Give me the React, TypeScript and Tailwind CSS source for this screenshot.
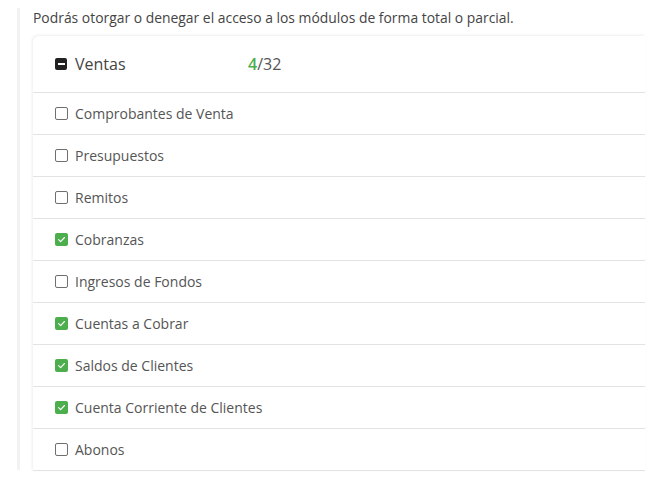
import React from "react";

const rows: { label: string; checked: boolean }[] = [
  { label: "Comprobantes de Venta", checked: false },
  { label: "Presupuestos", checked: false },
  { label: "Remitos", checked: false },
  { label: "Cobranzas", checked: true },
  { label: "Ingresos de Fondos", checked: false },
  { label: "Cuentas a Cobrar", checked: true },
  { label: "Saldos de Clientes", checked: true },
  { label: "Cuenta Corriente de Clientes", checked: true },
  { label: "Abonos", checked: false },
];

function Box({ checked }: { checked: boolean }) {
  if (checked) {
    return (
      <span className="flex h-[13px] w-[13px] items-center justify-center rounded-[2px] bg-[#4cae4c]">
        <svg width="9" height="9" viewBox="0 0 10 10" fill="none">
          <path d="M1.8 5.2 L4 7.3 L8.3 2.8" stroke="white" strokeWidth="1.3" strokeLinecap="round" strokeLinejoin="round" />
        </svg>
      </span>
    );
  }
  return <span className="block h-[13px] w-[13px] rounded-[2px] border-[1.5px] border-[#6f6f6f]" />;
}

export default function App() {
  return (
    <div className="h-[479px] w-[669px] bg-white pt-[8px] font-['Open_Sans',sans-serif]">
      <div className="ml-[17px] h-[462px] w-[628px] border-l-[3px] border-[#f2f2f2] pl-[13px]">
        <p className="text-[13.9px] leading-[19px] text-[#444]">
          Podrás otorgar o denegar el acceso a los módulos de forma total o parcial.
        </p>
        <div className="mt-[9px] overflow-hidden rounded-tl-[6px] bg-white shadow-[-1px_-1px_3px_rgba(0,0,0,0.07)]">
          <div className="flex h-[57px] items-center border-b border-[#e3e3e3] pl-[22px]">
            <span className="flex h-[12px] w-[12px] items-center justify-center rounded-[2px] bg-[#222]">
              <span className="block h-[2px] w-[7px] bg-white" />
            </span>
            <span className="ml-[8px] w-[173px] text-[16px] text-[#444]">Ventas</span>
            <span className="text-[16px] text-[#555]">
              <span className="font-semibold text-[#4cae4c]">4</span>/32
            </span>
          </div>
          {rows.map((r) => (
            <div key={r.label} className="flex h-[42px] items-center border-b border-[#e3e3e3] pl-[22px]">
              <Box checked={r.checked} />
              <span className="ml-[7px] text-[14px] text-[#555]">{r.label}</span>
            </div>
          ))}
        </div>
      </div>
    </div>
  );
}
